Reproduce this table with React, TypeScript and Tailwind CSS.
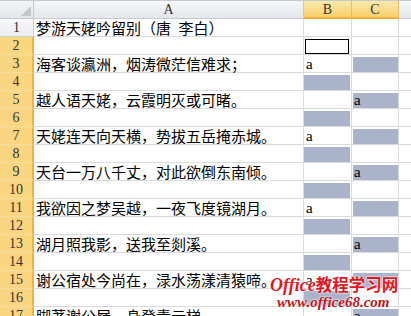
const lines = [
  "梦游天姥吟留别（唐\u2002李白）",
  "",
  "海客谈瀛洲，烟涛微茫信难求；",
  "",
  "越人语天姥，云霞明灭或可睹。",
  "",
  "天姥连天向天横，势拔五岳掩赤城。",
  "",
  "天台一万八千丈，对此欲倒东南倾。",
  "",
  "我欲因之梦吴越，一夜飞度镜湖月。",
  "",
  "湖月照我影，送我至剡溪。",
  "",
  "谢公宿处今尚在，渌水荡漾清猿啼。",
  "",
  "脚著谢公屐，身登青云梯。",
];

const Fill = ({ text }: { text?: string }) => (
  <div className="flex h-full items-end bg-[#a9b4cc] pl-[1px] leading-[15px]">
    {text}
  </div>
);

const RowCells = ({ n, line }: { n: number; line: string }) => {
  const selected = n >= 2;
  let b: React.ReactNode = null;
  let c: React.ReactNode = null;
  if (n === 2) {
    b = <div className="mx-[1px] h-[15px] border border-black bg-white" />;
  } else if (n >= 3 && n % 2 === 0) {
    b = <Fill />;
  } else if (n >= 3 && (n - 3) % 4 === 0) {
    b = <div className="flex h-full items-end pl-[2px] leading-[15px]">a</div>;
    c = <Fill />;
  } else if (n >= 3) {
    c = <Fill text="a" />;
  }

  return (
    <>
      <div
        className={
          selected
            ? "flex h-[18px] items-end justify-center border-b border-b-[#f3dfa6] border-r-2 border-r-[#f0b43c] bg-[#f9d67f] pb-[1px] text-[14px] leading-[14px] text-[#333]"
            : "flex h-[18px] items-end justify-center border-b border-r border-[#c9cdd3] bg-linear-to-b from-[#f7f8fa] to-[#eceef1] pb-[1px] text-[14px] leading-[14px] text-[#333]"
        }
      >
        {n}
      </div>
      <div className="h-[18px] overflow-visible whitespace-nowrap border-b border-r border-[#d9dbde] pl-[2px] font-['Noto_Sans_CJK_SC'] text-[15px] leading-[17px]">
        {line}
      </div>
      <div className="h-[18px] border-b border-r border-[#d9dbde] pt-[2px] pr-[1px]">
        {b}
      </div>
      <div className="h-[18px] border-b border-r border-[#d9dbde] pt-[2px] pl-[1px]">
        {c}
      </div>
      <div className="h-[18px] border-b border-[#d9dbde]" />
    </>
  );
};

export default function App() {
  return (
    <div className="relative h-[316px] w-[411px] overflow-hidden bg-white font-['Liberation_Serif','Noto_Sans_CJK_SC',serif] text-[15px] text-black">
      <div className="grid grid-cols-[34px_270px_48px_47px_12px]">
        <div className="flex h-[19px] items-end justify-end border-b border-r border-t border-[#c5cad1] bg-linear-to-b from-[#f4f5f7] to-[#e3e6ea] p-[2px]">
          <div className="h-0 w-0 border-b-[10px] border-l-[10px] border-b-[#c4c8ce] border-l-transparent" />
        </div>
        <div className="flex h-[19px] items-center justify-center border-b border-r border-t border-[#c5cad1] bg-linear-to-b from-[#f6f7f9] to-[#e4e7eb] text-[14px] text-[#333]">
          A
        </div>
        <div className="flex h-[19px] items-center justify-center border-b-2 border-r border-t border-b-[#efb13b] border-r-[#e2bd6a] border-t-[#c5cad1] bg-linear-to-b from-[#fce9ab] to-[#f8d06a] text-[14px] text-[#333]">
          B
        </div>
        <div className="flex h-[19px] items-center justify-center border-b-2 border-r border-t border-b-[#efb13b] border-r-[#e2bd6a] border-t-[#c5cad1] bg-linear-to-b from-[#fce9ab] to-[#f8d06a] text-[14px] text-[#333]">
          C
        </div>
        <div className="h-[19px] border-b border-t border-[#c5cad1] bg-linear-to-b from-[#f6f7f9] to-[#e4e7eb]" />
        {lines.map((line, i) => (
          <RowCells key={i} n={i + 1} line={line} />
        ))}
      </div>

      <div className="absolute left-[270px] top-[274px] flex flex-col [text-shadow:0_0_2px_#fff,0_0_2px_#fff]">
        <div className="flex items-baseline whitespace-nowrap leading-[20px] text-[#e3161d]">
          <span className="text-[18px] font-bold italic">Office</span>
          <span className="font-['Noto_Sans_CJK_SC'] text-[16.5px] font-bold">教程学习网</span>
        </div>
        <div className="ml-[7px] whitespace-nowrap text-[15px] font-bold italic leading-[15px] text-[#c0161c]">
          www.office68.com
        </div>
      </div>
    </div>
  );
}
